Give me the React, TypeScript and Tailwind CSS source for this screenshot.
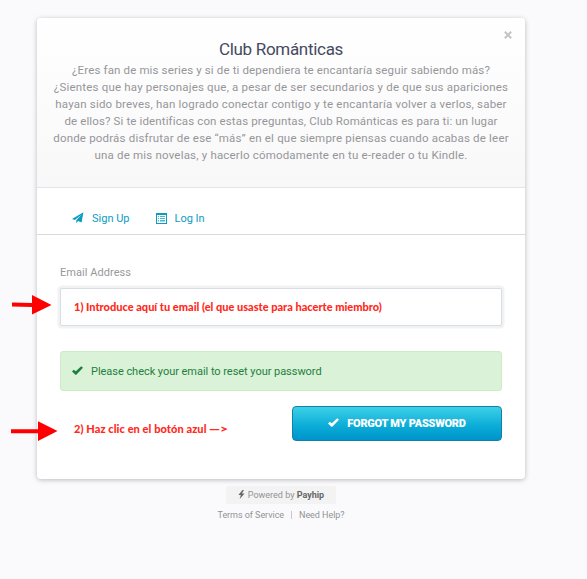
import type { ReactNode } from "react";

const description = [
  { text: "¿Eres fan de mis series y si de ti dependiera te encantaría seguir sabiendo más?", tracking: "tracking-[0.14px]" },
  { text: "¿Sientes que hay personajes que, a pesar de ser secundarios y de que sus apariciones", tracking: "tracking-[0.19px]" },
  { text: "hayan sido breves, han logrado conectar contigo y te encantaría volver a verlos, saber", tracking: "tracking-[0.2px]" },
  { text: "de ellos? Si te identificas con estas preguntas, Club Románticas es para ti: un lugar", tracking: "tracking-[0.13px]" },
  { text: "donde podrás disfrutar de ese “más” en el que siempre piensas cuando acabas de leer", tracking: "tracking-[0.19px]" },
  { text: "una de mis novelas, y hacerlo cómodamente en tu e-reader o tu Kindle.", tracking: "tracking-[0.19px]" },
];

function PlaneIcon() {
  return (
    <svg viewBox="0 0 12 12" className="h-3 w-3 shrink-0" fill="currentColor">
      <path d="M11.4.3 0 7l2.900.9L9.600 2.600 4.300 8.200v3.100l1.700-2.200 3.600 1.500z" />
    </svg>
  );
}

function ListIcon() {
  return (
    <svg viewBox="0 0 11 11" className="h-[11px] w-[11px] shrink-0" fill="currentColor">
      <path fillRule="evenodd" d="M0 0h11v11H0zM1 2v8h9V2z" />
      <path opacity=".75" d="M2 3h1v1H2zM4 3h5v1H4zM2 5h1v1H2zM4 5h5v1H4zM2 7h1v1H2zM4 7h5v1H4zM2 8.500h1v.5H2zM4 8.500h5v.5H4z" />
    </svg>
  );
}

function CheckIcon({ className }: { className: string }) {
  return (
    <svg viewBox="0 0 11 9" className={className} fill="currentColor">
      <path d="M9.2.2 11 1.8 4.3 8.8H3.4L0 5.4l1.7-1.6 2.1 1.500z" />
    </svg>
  );
}

function BoltIcon() {
  return (
    <svg viewBox="0 0 7 9" className="relative -top-px h-[9px] w-[7px] shrink-0" fill="#666">
      <path d="M4.500 0 .4 5h2.400L1.700 9l4.800-5.500H3.900L6 0z" />
    </svg>
  );
}

function Tab({ icon, children }: { icon: ReactNode; children: ReactNode }) {
  return (
    <a className="flex items-center gap-2">
      {icon}
      <span className="pt-0.5">{children}</span>
    </a>
  );
}

export default function App() {
  return (
    <div className="relative h-[579px] w-[587px] overflow-hidden bg-[#fafafc] pl-[37px] pt-[18px] font-[Roboto,sans-serif] text-[11px]">
      <div className="relative h-[461px] w-[488px] rounded-[4px] bg-white shadow-[0_1px_5px_rgba(0,0,0,0.25)]">
        <header className="h-[170px] rounded-t-[4px] border-b border-[#e4e4e6] bg-linear-to-b from-white to-[#f8f8f8] pt-[21px] text-center">
          <h1 className="h-[23px] whitespace-nowrap text-[17px] leading-[21px] tracking-[-0.3px] text-[#454a60]">Club Románticas</h1>
          <p className="text-[11.5px] text-[#96969a]">
            {description.map((line) => (
              <span key={line.text} className={`block whitespace-nowrap leading-[17px] ${line.tracking}`}>
                {line.text}
              </span>
            ))}
          </p>
          <button className="absolute right-[13px] top-[13px]" aria-label="Close">
            <svg viewBox="0 0 8 8" className="h-2 w-2 text-[#c4c4c6]" fill="none" stroke="currentColor" strokeWidth="2">
              <path d="M.8.8l6.4 6.4M7.2.8.8 7.2" />
            </svg>
          </button>
        </header>

        <nav className="flex h-[47px] items-center gap-[26px] border-b border-[#d9d9da] pl-[35px] pt-[14px] text-[#0b9cc2]">
          <Tab icon={<PlaneIcon />}>Sign Up</Tab>
          <Tab icon={<ListIcon />}>Log In</Tab>
        </nav>

        <form className="px-[23px] pt-[29px]">
          <label className="block h-[24px] leading-[18px] tracking-[0.05px] text-[#98989a]">Email Address</label>
          <div className="flex h-[38px] items-center rounded-[2px] border border-[#d8dde4] bg-white pl-[13px] shadow-[0_0_0_2.5px_#f1f2f4]">
            <span className="whitespace-nowrap pt-px font-[Lato,sans-serif] text-[11px] font-black text-[#ff2a1c]">
              1) Introduce aquí tu email (el que usaste para hacerte miembro)
            </span>
          </div>
          <div className="mt-[25px] flex h-10 items-center gap-2 rounded-[3px] border border-[#cdecc6] bg-[#daf2d8] pl-[11px] text-[#1f7f3d]">
            <CheckIcon className="relative -top-px h-[9px] w-[11px]" />
            <span className="pt-0.5 tracking-[-0.04px]">Please check your email to reset your password</span>
          </div>
          <div className="mt-[15px] flex justify-between">
            <span className="ml-[14px] mt-[15px] whitespace-nowrap font-[Lato,sans-serif] text-[11px] font-black tracking-[0.08px] text-[#ff2a1c]">
              2) Haz clic en el botón azul <span className="inline-block origin-left scale-x-125">—&gt;</span>
            </span>
            <button
              type="button"
              className="flex h-[35px] w-[210px] items-center justify-center gap-2 rounded-[4px] border border-[#1580a6] bg-linear-to-b from-[#3bd0e8] via-[#0eb1d9] to-[#0093cb] text-[11px] font-black text-white"
            >
              <CheckIcon className="relative -top-px h-[9px] w-[11px]" />
              <span className="pt-0.5 tracking-[-0.25px]">FORGOT MY PASSWORD</span>
            </button>
          </div>
        </form>
      </div>

      <footer className="flex w-[488px] flex-col items-center pt-[7px] text-[9px] text-[#929295]">
        <div className="flex h-[18px] w-[110px] items-center justify-center gap-[3px] rounded-[2px] bg-[#f3f3f3]">
          <BoltIcon />
          <span className="pt-px">
            Powered by <b className="text-[#666]">Payhip</b>
          </span>
        </div>
        <div className="flex h-[22px] items-center gap-[7px] pt-px tracking-[-0.05px]">
          <span className="pt-px">Terms of Service</span>
          <i className="mb-0.5 h-2 w-px bg-[#c8c8ca]" />
          <span className="pt-px">Need Help?</span>
        </div>
      </footer>

      {/* Annotation arrows */}
      <svg viewBox="0 0 48 20" className="absolute left-[11px] top-[295px] h-5 w-12" fill="#fe0000">
        <path d="M1 7.5 21 8V0l19.500 10L21 19.500v-7.500L1 11.500z" />
      </svg>
      <svg viewBox="0 0 48 20" className="absolute left-[11px] top-[421px] h-5 w-12" fill="#fe0000">
        <path d="M0 8.300h27V.2L46.500 10 27 20v-7.800H0z" />
      </svg>
    </div>
  );
}
